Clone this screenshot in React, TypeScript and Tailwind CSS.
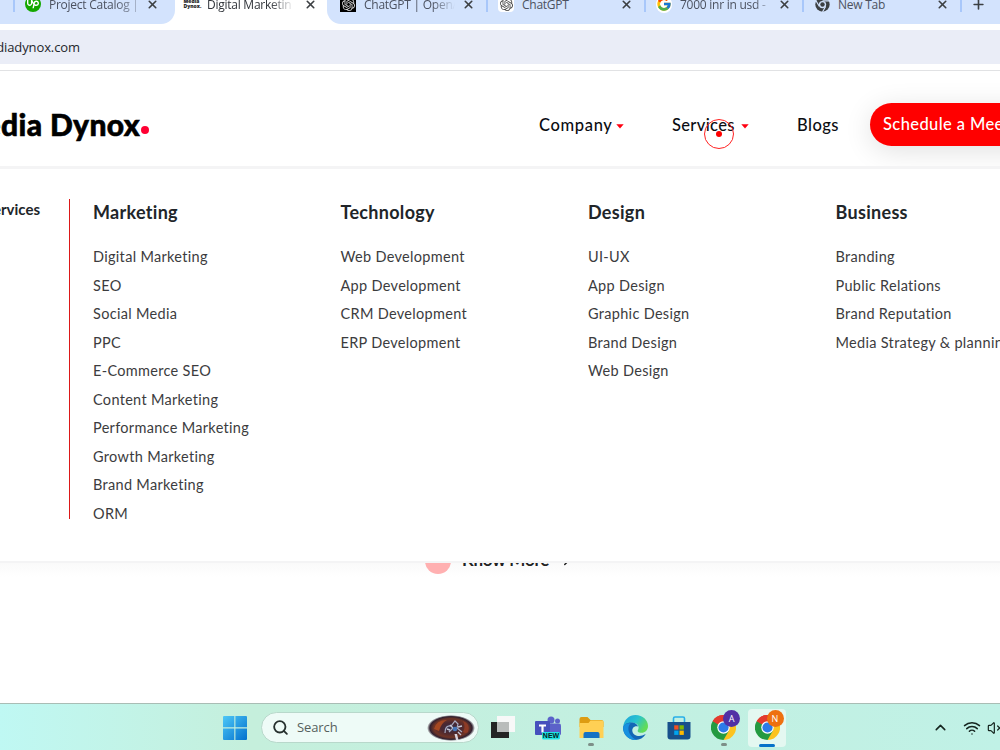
import React from "react";
import { X, Plus, Search, ChevronUp, ChevronRight, Wifi, VolumeX } from "lucide-react";
import { SiOpenai, SiUpwork } from "react-icons/si";
import { FcGoogle } from "react-icons/fc";

const columns = [
  {
    title: "Marketing",
    items: ["Digital Marketing", "SEO", "Social Media", "PPC", "E-Commerce SEO", "Content Marketing", "Performance Marketing", "Growth Marketing", "Brand Marketing", "ORM"],
  },
  { title: "Technology", items: ["Web Development", "App Development", "CRM Development", "ERP Development"] },
  { title: "Design", items: ["UI-UX", "App Design", "Graphic Design", "Brand Design", "Web Design"] },
  { title: "Business", items: ["Branding", "Public Relations", "Brand Reputation", "Media Strategy & planning"] },
];

function Tab({ icon, label, width, textWidth }: { icon: React.ReactNode; label: string; width: string; textWidth: string }) {
  return (
    <div className={`flex h-[24px] shrink-0 items-start ${width}`}>
      <span className="-mt-[4px] flex h-[16px] w-[16px] shrink-0 items-center justify-center">{icon}</span>
      <span className={`-mt-[4px] ml-[8px] shrink-0 overflow-hidden whitespace-nowrap text-[12px] leading-[18px] tracking-[-0.25px] ${textWidth}`}>{label}</span>
      <X className="-mt-[2px] ml-[15px] shrink-0 text-[#3c4043]" size={13} strokeWidth={3} />
    </div>
  );
}

function Separator() {
  return <span className="h-[12px] w-[2px] shrink-0 bg-[#a8c7fa]" />;
}

function BrowserIcon({ className }: { className?: string }) {
  return (
    <svg viewBox="0 0 24 24" className={className}>
      <path d="M12 12 L1.6 6 A12 12 0 0 1 22.4 6 Z" fill="#e33b2e" />
      <path d="M12 12 L22.4 6 A12 12 0 0 1 12 24 Z" fill="#fcc31e" />
      <path d="M12 12 L12 24 A12 12 0 0 1 1.6 6 Z" fill="#249a41" />
      <path d="M12 6 H22.4 L17.2 15 Z" fill="#fcc31e" />
      <path d="M17.2 15 L12 24 L6.8 15 Z" fill="#249a41" />
      <path d="M6.8 15 L1.6 6 L12 6 Z" fill="#249a41" />
      <path d="M1.6 6 A12 12 0 0 1 22.4 6 H12 L6.8 9 Z" fill="#e33b2e" />
      <circle cx="12" cy="12" r="6" fill="#fff" />
      <circle cx="12" cy="12" r="4.9" fill="#2c7be9" />
    </svg>
  );
}

function MonoBrowserIcon() {
  return (
    <svg viewBox="0 0 24 24" className="h-[15px] w-[15px]">
      <circle cx="12" cy="12" r="11.5" fill="#3c4043" />
      <circle cx="12" cy="12" r="5.8" fill="#d3e3fd" />
      <circle cx="12" cy="12" r="3.6" fill="#3c4043" />
      <path d="M12 6.2H23M7 15L1.5 6M17 15L12 24" stroke="#d3e3fd" strokeWidth="1.8" />
    </svg>
  );
}

function TabStrip() {
  return (
    <div className="flex h-[24px] overflow-hidden bg-white font-['Open_Sans',sans-serif] text-[#4c5260]">
      <div className="flex h-[24px] w-[175px] shrink-0 rounded-br-[14px] bg-[#d3e3fd] pl-[13px]">
        <Separator />
        <span className="w-[10px] shrink-0" />
        <Tab
          icon={<span className="flex h-[16px] w-[16px] items-center justify-center rounded-full bg-[#14a800]"><SiUpwork size={12} color="#fff" /></span>}
          label="Project Catalog |"
          width="w-[140px]"
          textWidth="w-[87px] -mr-[5px] [mask-image:linear-gradient(to_right,#000_75%,#0006)]"
        />
      </div>
      <div className="flex h-[24px] w-[152px] shrink-0 bg-white pl-[8px] text-[#30343a]">
        <Tab
          icon={<span className="w-[15px] text-[5px] leading-[5px] font-black text-[#222]">Media<br />Dynox.</span>}
          label="Digital Marketing"
          width="w-[144px]"
          textWidth="w-[84px] -mr-[2px] [mask-image:linear-gradient(to_right,#000_75%,#0002)]"
        />
      </div>
      <div className="flex h-[24px] min-w-0 flex-1 rounded-bl-[14px] bg-[#d3e3fd] pl-[13px]">
        <Tab
          icon={<span className="flex h-[16px] w-[16px] items-center justify-center bg-black"><SiOpenai size={13} color="#ddd" /></span>}
          label="ChatGPT | OpenAI"
          width="w-[146px]"
          textWidth="w-[91px] -mr-[8px] [mask-image:linear-gradient(to_right,#000_75%,transparent)]"
        />
        <Separator />
        <span className="w-[10px] shrink-0" />
        <Tab
          icon={<span className="flex h-[16px] w-[16px] items-center justify-center rounded-sm bg-white"><SiOpenai size={13} color="#444" /></span>}
          label="ChatGPT"
          width="w-[146px]"
          textWidth="w-[83px]"
        />
        <Separator />
        <span className="w-[10px] shrink-0" />
        <Tab
          icon={<span className="flex h-[17px] w-[17px] items-center justify-center rounded-full bg-white"><FcGoogle size={16} /></span>}
          label="7000 inr in usd -"
          width="w-[146px]"
          textWidth="w-[88px] -mr-[5px] [mask-image:linear-gradient(to_right,#000_85%,#0004)]"
        />
        <Separator />
        <span className="w-[10px] shrink-0" />
        <Tab icon={<MonoBrowserIcon />} label="New Tab" width="w-[146px]" textWidth="w-[83px]" />
        <Separator />
        <Plus className="-mt-[3px] ml-[9px] shrink-0 text-[#3c4043]" size={15} strokeWidth={2.6} />
      </div>
    </div>
  );
}

function Caret() {
  return (
    <svg viewBox="0 0 8 5" className="mt-[2px] h-[5px] w-[8px]">
      <path d="M0.8 0.5H7.2L4 4.2Z" fill="#f01" stroke="#f01" strokeWidth="0.5" strokeLinejoin="round" />
    </svg>
  );
}

function Header() {
  return (
    <header className="flex h-[95px] overflow-hidden bg-white text-[#0b0d12]">
      <div className="flex w-[539px] shrink-0 pt-[33px]">
        <div className="-ml-[44px] flex whitespace-nowrap text-[30px] leading-[40px] font-black tracking-[0.4px] text-black [-webkit-text-stroke:0.6px_#000]">
          <span>Media Dynox</span>
          <span className="mt-[22px] ml-[1px] h-[8px] w-[8px] rounded-full bg-[#ff0033]" />
        </div>
      </div>
      <nav className="flex shrink-0 items-start pt-[42px] text-[16.5px] leading-[24px] font-medium">
        <div className="flex w-[133px] items-center whitespace-nowrap">
          <span className="w-[77px] tracking-[0.65px]">Company</span>
          <Caret />
        </div>
        <div className="relative flex w-[125px] items-center whitespace-nowrap">
          <span className="w-[69px] tracking-[0.35px]">Services</span>
          <Caret />
          <span className="absolute top-[6px] left-[32px] flex h-[30px] w-[30px] items-center justify-center rounded-full border border-[#f22]">
            <span className="h-[6px] w-[6px] rounded-full bg-[#f00]" />
          </span>
        </div>
        <span className="w-[73px] tracking-[0.45px]">Blogs</span>
      </nav>
      <div className="mt-[32px] h-[43px] w-[200px] shrink-0 rounded-full bg-[#ff0000] pl-[13px] text-[16.5px] leading-[43px] font-medium tracking-[0.4px] whitespace-nowrap text-white shadow-[0_5px_28px_rgba(0,0,0,0.12)]">
        Schedule a Meeting
      </div>
    </header>
  );
}

function ServicesMenu() {
  return (
    <section className="flex h-[397px] overflow-hidden border-t-[3px] border-b-2 border-[#f4f4f5] bg-white pt-[30px]">
      <div className="flex h-[320px] w-[70px] shrink-0 justify-end pr-[30px]">
        <span className="text-[15px] leading-[21px] font-bold whitespace-nowrap text-[#212529]">Our Services</span>
      </div>
      <div className="-ml-px h-[320px] w-px shrink-0 bg-[#dc1818]" />
      <div className="flex shrink-0 pl-[23px]">
        {columns.map((c) => (
          <div key={c.title} className="w-[247.5px] shrink-0 whitespace-nowrap">
            <h3 className="text-[18px] leading-[27px] font-bold tracking-[0.3px] text-[#212529]">{c.title}</h3>
            <ul className="mt-[17px] text-[14.5px] leading-[28.5px] tracking-[0.31px] text-[#3c3c3e]">
              {c.items.map((i) => (
                <li key={i}>{i}</li>
              ))}
            </ul>
          </div>
        ))}
      </div>
    </section>
  );
}

function TaskView() {
  return (
    <svg viewBox="0 0 24 24" className="h-[24px] w-[24px]">
      <rect x="0" y="6" width="18" height="16" fill="#242424" />
      <rect x="6" y="0" width="18" height="16" fill="#f7f8f8" />
      <rect x="6" y="6" width="12" height="10" fill="#b9bcbb" />
    </svg>
  );
}

function Teams() {
  return (
    <svg viewBox="0 0 26 24" className="h-[24px] w-[26px]">
      <circle cx="16" cy="4" r="3.5" fill="#5b62c9" />
      <circle cx="22.5" cy="5" r="2.5" fill="#5b62c9" />
      <rect x="12" y="7.5" width="14" height="12" rx="2" fill="#5b62c9" />
      <rect x="0" y="5" width="15" height="14" rx="1" fill="#4650bd" />
      <path d="M4 8.5H11V10.6H8.6V16.5H6.4V10.6H4Z" fill="#fff" />
      <rect x="7" y="16" width="18" height="7.5" rx="1.5" fill="#1ee4e4" />
      <text x="16" y="22.3" fontSize="7" fontWeight="900" textAnchor="middle" fill="#052020" fontFamily="Liberation Sans, sans-serif">NEW</text>
    </svg>
  );
}

function Folder() {
  return (
    <svg viewBox="0 0 24 22" className="h-[22px] w-[25px]">
      <path d="M0 2Q0 0 2 0H8L11 3H22Q24 3 24 5V10H0Z" fill="#dd9c12" />
      <path d="M0 6H9L11 3.5H23Q24 3.5 24 5V21H0Z" fill="#ffd054" />
      <path d="M4 21V17Q4 15 6 15H18Q20 15 20 17V21Z" fill="#1672c4" />
    </svg>
  );
}

function Edge() {
  return (
    <svg viewBox="0 0 24 24" className="h-[25px] w-[25px]">
      <defs>
        <linearGradient id="edgeTop" x1="0" y1="0" x2="1" y2="0.5">
          <stop offset="0" stopColor="#1aa2dc" />
          <stop offset="0.55" stopColor="#29c3cf" />
          <stop offset="1" stopColor="#62dc57" />
        </linearGradient>
      </defs>
      <path d="M0.2 11C1 4.5 6 0 12 0C19 0 24 5 24 10.5C24 14.5 21 17 18 17C14 17 13.5 15.4 14.6 13.8C16 11.2 13.8 7.5 9.5 7.5C5 7.5 1.5 9.5 0.2 11Z" fill="url(#edgeTop)" />
      <path d="M0 12C0.5 9 4.5 6.8 9 7.2C12 7.5 14 9.3 14.5 11C11 10 8.5 12.3 9 15.5C9.6 19.5 15.5 22 21.8 18.3C19.8 22 16 24 12 24C5 24 0 18.5 0 12Z" fill="#1366b6" />
      <path d="M7.4 8C3.8 10.5 3.8 20 13.5 23.9C5.5 24.8 0 18.5 0 12C1 9 4 7.5 7.4 8Z" fill="#1790df" />
    </svg>
  );
}

function Store() {
  return (
    <svg viewBox="0 0 24 24" className="h-[24px] w-[24px]">
      <path d="M6.5 6V2.5Q6.5 1 8 1H16Q17.5 1 17.5 2.5V6" fill="none" stroke="#28aee8" strokeWidth="1.6" />
      <path d="M0.5 6H23.5V20.5Q23.5 23.5 20.5 23.5H3.5Q0.5 23.5 0.5 20.5Z" fill="#17508b" />
      <rect x="7.2" y="9.3" width="4.3" height="4.3" fill="#f25022" />
      <rect x="12.5" y="9.3" width="4.3" height="4.3" fill="#7fba00" />
      <rect x="7.2" y="14.6" width="4.3" height="4.3" fill="#00a4ef" />
      <rect x="12.5" y="14.6" width="4.3" height="4.3" fill="#ffb900" />
    </svg>
  );
}

function Windows() {
  return (
    <svg viewBox="0 0 24 24" className="h-[24px] w-[24px] shrink-0">
      <defs>
        <linearGradient id="win" x1="0" y1="0" x2="1" y2="1">
          <stop offset="0" stopColor="#4ec8f7" />
          <stop offset="1" stopColor="#0270cd" />
        </linearGradient>
      </defs>
      <path d="M0 1Q0 0 1 0H11.3V11.3H0ZM12.4 0H23Q24 0 24 1V11.3H12.4ZM0 12.4H11.3V24H1Q0 24 0 23ZM12.4 12.4H24V23Q24 24 23 24H12.4Z" fill="url(#win)" />
    </svg>
  );
}

function SearchArt() {
  return (
    <svg viewBox="0 0 48 26" className="h-[26px] w-[48px]">
      <defs>
        <radialGradient id="art">
          <stop offset="0" stopColor="#33344f" />
          <stop offset="0.4" stopColor="#4a2730" />
          <stop offset="0.72" stopColor="#6f3426" />
          <stop offset="0.88" stopColor="#30202f" />
          <stop offset="1" stopColor="#38212f" stopOpacity="0" />
        </radialGradient>
      </defs>
      <ellipse cx="24" cy="13" rx="24" ry="13" fill="url(#art)" />
      <path d="M7 14Q9 5 20 5Q14 8 12 16Z" fill="#a54822" />
      <path d="M36 6Q44 9 41 17Q39 19 36 17Q39 12 36 6Z" fill="#8d3b26" />
      <path d="M18 18Q18 10 24 11L28 6L31 9L30 13L35 17M22 17L26 13" fill="none" stroke="#a9adc4" strokeWidth="1.2" />
      <path d="M23 10L26 13M31 12L35 11M20 14L23 15M31 17L34 20" stroke="#c6c7d6" strokeWidth="1.4" />
      <circle cx="28" cy="14" r="2.3" fill="#4779bd" />
      <path d="M27.5 19L29 25H31.5L30 19Z" fill="#d8d4df" />
    </svg>
  );
}

function BrowserApp({ letter, badge }: { letter: string; badge: string }) {
  return (
    <div className="relative h-[25px] w-[25px]">
      <BrowserIcon className="h-[25px] w-[25px]" />
      <span className={`absolute -top-[5px] left-[12px] flex h-[17px] w-[17px] items-center justify-center rounded-full text-[9px] text-white ${badge}`}>{letter}</span>
    </div>
  );
}

function Taskbar() {
  return (
    <footer className="flex h-[47px] shrink-0 items-center overflow-hidden border-t border-[#a9bdb5] bg-linear-to-r from-[#bff8f3] via-[#c5efdc] via-25% to-[#c0f1e6] pt-px pl-[223px] font-['Open_Sans',sans-serif]">
      <Windows />
      <div className="ml-[14px] flex h-[31px] w-[218px] shrink-0 items-center rounded-full border border-[#b8d8cb] bg-[#eefbf7] pl-[10px]">
        <Search size={17} strokeWidth={2.6} className="text-[#26302e]" />
        <span className="ml-[8px] w-[130px] text-[13px] tracking-[-0.1px] text-[#56615e]">Search</span>
        <SearchArt />
      </div>
      <div className="ml-[12px] shrink-0"><TaskView /></div>
      <div className="ml-[20px] shrink-0"><Teams /></div>
      <div className="relative ml-[18px] shrink-0">
        <Folder />
        <span className="absolute -bottom-[7px] left-[9px] h-[3px] w-[6px] rounded-full bg-[#7d8f88]" />
      </div>
      <div className="ml-[19px] shrink-0"><Edge /></div>
      <div className="ml-[19px] shrink-0"><Store /></div>
      <div className="relative ml-[20px] shrink-0">
        <BrowserApp letter="A" badge="bg-[#5030a5]" />
        <span className="absolute -bottom-[6px] left-[10px] h-[3px] w-[6px] rounded-full bg-[#7d8f88]" />
      </div>
      <div className="relative ml-[12px] flex h-[38px] w-[38px] shrink-0 items-center justify-center rounded-[4px] bg-[#e4f8f1]">
        <BrowserApp letter="N" badge="bg-[#ee7010]" />
        <span className="absolute bottom-0 left-[11px] h-[3px] w-[16px] rounded-full bg-[#0872c9]" />
      </div>
      <ChevronUp size={17} strokeWidth={2.2} className="ml-[146px] shrink-0 text-[#15251f]" />
      <Wifi size={18} strokeWidth={2} className="ml-[14px] shrink-0 text-[#15251f]" />
      <VolumeX size={16} strokeWidth={1.8} className="ml-[6px] shrink-0 text-[#15251f]" />
    </footer>
  );
}

export default function App() {
  return (
    <div className="flex h-[750px] w-[1000px] flex-col overflow-hidden bg-white font-['Lato',sans-serif]">
      <TabStrip />
      <div className="h-[47px] shrink-0 border-b border-[#e1e2e4] pt-[6px]">
        <div className="flex h-[34px] items-center bg-[#eaedf7] pt-px font-['Open_Sans',sans-serif] text-[13px] text-[#25272c]">
          <span className="-ml-[23px] tracking-[-0.1px]">mediadynox.com</span>
        </div>
      </div>
      <Header />
      <ServicesMenu />
      <main className="h-[140px] shrink-0 overflow-hidden bg-linear-to-b from-[#fafafa] to-white to-10%">
        <div className="-mt-[15px] flex h-[26px] items-center pl-[425px]">
          <span className="h-[26px] w-[26px] rounded-full bg-[#ffb0b1]" />
          <span className="-mt-[3px] ml-[11px] w-[96px] text-[17px] leading-[24px] font-bold tracking-[-0.2px] whitespace-nowrap text-[#222]">Know More</span>
          <ChevronRight size={18} strokeWidth={2} className="-mt-[2px] text-[#222]" />
        </div>
      </main>
      <Taskbar />
    </div>
  );
}
